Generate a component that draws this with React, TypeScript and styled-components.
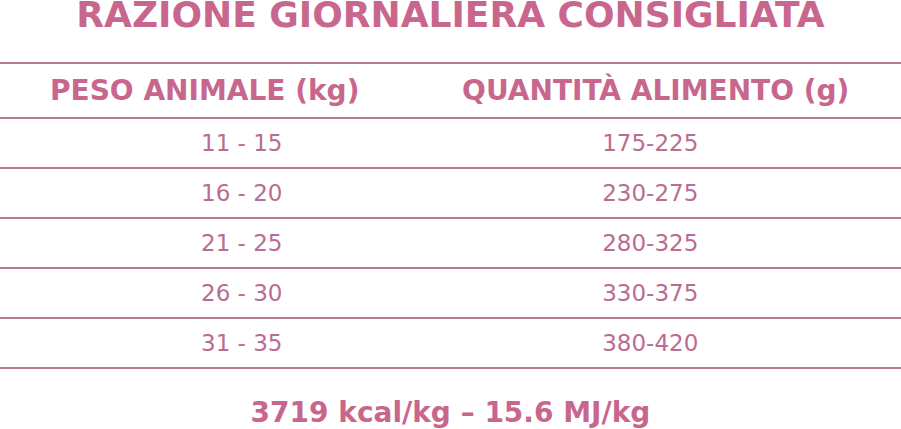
import React from "react";
import styled, { createGlobalStyle } from "styled-components";

const Global = createGlobalStyle`
  html, body { margin: 0; padding: 0; background: #ffffff; }
  body { font-family: "DejaVu Sans", Verdana, sans-serif; }
`;

const Page = styled.div`
  width: 901px;
  height: 429px;
  overflow: hidden;
  display: flex;
  flex-direction: column;
  background: #ffffff;
`;

const Title = styled.h1`
  margin: 0 0 33px 0;
  font-size: 36px;
  line-height: 29px;
  font-weight: 700;
  color: #c8668e;
  text-align: center;
  white-space: nowrap;
`;

const Table = styled.div`
  display: flex;
  flex-direction: column;
  border-top: 2px solid #b27b93;
`;

const Row = styled.div<{ $head?: boolean }>`
  display: grid;
  grid-template-columns: 1fr 1fr;
  height: ${(p) => (p.$head ? 53 : 48)}px;
  border-bottom: 2px solid #b27b93;
`;

const Cell = styled.div<{ $head?: boolean; $pl?: number; $pr?: number }>`
  display: flex;
  align-items: center;
  justify-content: center;
  padding-left: ${(p) => p.$pl ?? 0}px;
  padding-right: ${(p) => p.$pr ?? 0}px;
  font-size: ${(p) => (p.$head ? 28 : 23)}px;
  font-weight: ${(p) => (p.$head ? 700 : 400)};
  color: ${(p) => (p.$head ? "#c8668e" : "#b96d92")};
  white-space: nowrap;
`;

const Footer = styled.div`
  margin-top: 30px;
  font-size: 28px;
  line-height: 28px;
  font-weight: 700;
  color: #c8668e;
  text-align: center;
  white-space: nowrap;
`;

const rows: [string, string][] = [
  ["11 - 15", "175-225"],
  ["16 - 20", "230-275"],
  ["21 - 25", "280-325"],
  ["26 - 30", "330-375"],
  ["31 - 35", "380-420"],
];

export default function App() {
  return (
    <Page>
      <Global />
      <Title>RAZIONE GIORNALIERA CONSIGLIATA</Title>
      <Table>
        <Row $head>
          <Cell $head $pr={41}>PESO ANIMALE (kg)</Cell>
          <Cell $head $pr={40}>QUANTITÀ ALIMENTO (g)</Cell>
        </Row>
        {rows.map(([a, b]) => (
          <Row key={a}>
            <Cell $pl={33}>{a}</Cell>
            <Cell $pr={51}>{b}</Cell>
          </Row>
        ))}
      </Table>
      <Footer>3719 kcal/kg – 15.6 MJ/kg</Footer>
    </Page>
  );
}
